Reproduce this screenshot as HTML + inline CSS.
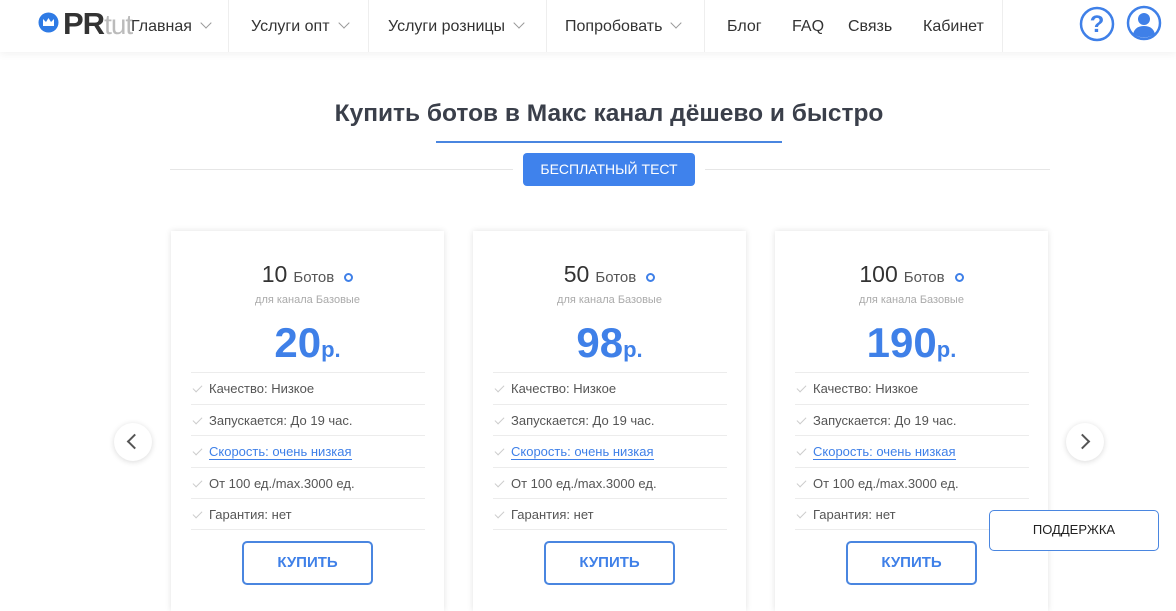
<!DOCTYPE html>
<html><head><meta charset="utf-8"><style>
*{margin:0;padding:0;box-sizing:border-box}
body{width:1176px;height:597px;overflow:hidden;background:#fff;font-family:"Liberation Sans",sans-serif;position:relative;color:#333}
.hdr{position:absolute;left:0;top:0;width:1176px;height:52px;background:#fff;box-shadow:0 2px 8px rgba(0,0,0,.06)}
.a{position:absolute;top:18px;font-size:16px;color:#333;white-space:nowrap}
.ch{display:inline-block;width:8px;height:8px;border-right:1.3px solid #999;border-bottom:1.3px solid #999;transform:rotate(45deg);margin-left:10px;position:relative;top:-4px}
.sep{position:absolute;top:0;width:1px;height:52px;background:#eee}
.card{position:absolute;top:231px;width:273px;height:380px;background:#fff;box-shadow:0 0 6px rgba(0,0,0,.12)}
.t{position:absolute;top:30px;left:0;width:100%;text-align:center;font-size:23px;color:#333}
.t span{font-size:15px;color:#555;margin-left:6px}
.t i{display:inline-block;width:9px;height:9px;border:2.5px solid #3f80e8;border-radius:50%;margin-left:10px}
.s{position:absolute;top:63px;width:100%;text-align:center;font-size:11px;color:#aaa}
.p{position:absolute;top:88px;width:100%;text-align:center;font-size:42px;font-weight:bold;color:#3f80e8}
.p span{font-size:22px}
.ul{position:absolute;top:141px;left:20px;width:234px}
.li{height:31.5px;border-top:1px solid #ececec;font-size:13px;color:#555;padding:8px 0 0 18px;position:relative}
.li:last-child{border-bottom:1px solid #ececec}
.li:before{content:"";position:absolute;left:4px;top:10px;width:4px;height:8px;border-right:1px solid #ccc;border-bottom:1px solid #ccc;transform:rotate(45deg)}
.li a{color:#3f80e8;text-decoration:none;border-bottom:1px solid #3f80e8}
.btn{position:absolute;left:71px;top:310px;width:131px;height:44px;border:2px solid #4a86e0;border-radius:5px;text-align:center;line-height:40px;font-weight:bold;font-size:15px;color:#3f80e8}
.arr{position:absolute;top:423px;width:38px;height:38px;border-radius:50%;background:#fff;box-shadow:0 1px 6px rgba(0,0,0,.15)}
.arr i{position:absolute;top:13px;width:11px;height:11px;border-left:2px solid #555;border-bottom:2px solid #555}
</style></head><body>
<div class="hdr">
<svg style="position:absolute;left:38px;top:12px" width="21" height="21"><circle cx="10.5" cy="10.5" r="10" fill="#2f7be5"/><path d="M5 14 L5 7 L8 10 L10.5 6 L13 10 L16 7 L16 14 Z" fill="#fff"/></svg>
<div style="position:absolute;left:63px;top:6px;font-size:31px;font-weight:bold;color:#333;letter-spacing:-1px">PR<span style="font-weight:normal;color:#bbb;font-size:28px">tut</span></div>
<div class="a" style="left:131px">Главная<span class="ch"></span></div>
<div class="sep" style="left:228px"></div>
<div class="a" style="left:251px">Услуги опт<span class="ch"></span></div>
<div class="sep" style="left:368px"></div>
<div class="a" style="left:388px">Услуги розницы<span class="ch"></span></div>
<div class="sep" style="left:546px"></div>
<div class="a" style="left:565px">Попробовать<span class="ch"></span></div>
<div class="sep" style="left:704px"></div>
<div class="a" style="left:727px">Блог</div>
<div class="a" style="left:792px">FAQ</div>
<div class="a" style="left:848px">Связь</div>
<div class="a" style="left:923px">Кабинет</div>
<div class="sep" style="left:1002px"></div>
<svg style="position:absolute;left:1079px;top:6px" width="36" height="36"><circle cx="18" cy="18" r="16" fill="none" stroke="#3f80e8" stroke-width="2.5"/><text x="18" y="26" text-anchor="middle" font-size="24" font-weight="bold" fill="#3f80e8" font-family="Liberation Sans">?</text></svg>
<svg style="position:absolute;left:1126px;top:5px" width="36" height="36"><circle cx="18" cy="18" r="16" fill="none" stroke="#3f80e8" stroke-width="2.5"/><circle cx="18" cy="14" r="6" fill="#3f80e8"/><path d="M7 29 Q9 21 18 21 Q27 21 29 29 Q18 36 7 29Z" fill="#3f80e8"/></svg>
</div>
<div style="position:absolute;top:100px;left:333px;width:552px;text-align:center;font-size:24.5px;font-weight:bold;color:#3a3f4a;white-space:nowrap">Купить ботов в Макс канал дёшево и быстро</div>
<div style="position:absolute;left:436px;top:141px;width:346px;height:2px;background:#4a86e0"></div>
<div style="position:absolute;left:170px;top:169px;width:343px;height:1px;background:#e6e6e6"></div>
<div style="position:absolute;left:705px;top:169px;width:345px;height:1px;background:#e6e6e6"></div>
<div style="position:absolute;left:523px;top:153px;width:172px;height:33px;background:#3f82ec;border-radius:4px;color:#fff;font-size:14px;text-align:center;line-height:33px">БЕСПЛАТНЫЙ ТЕСТ</div>

<div class="card" style="left:171px"><div class="t">10<span>Ботов</span><i></i></div><div class="s">для канала Базовые</div><div class="p">20<span>р.</span></div>
<div class="ul"><div class="li">Качество: Низкое</div><div class="li">Запускается: До 19 час.</div><div class="li"><a>Скорость: очень низкая</a></div><div class="li">От 100 ед./max.3000 ед.</div><div class="li">Гарантия: нет</div></div><div class="btn">КУПИТЬ</div></div>
<div class="card" style="left:473px"><div class="t">50<span>Ботов</span><i></i></div><div class="s">для канала Базовые</div><div class="p">98<span>р.</span></div>
<div class="ul"><div class="li">Качество: Низкое</div><div class="li">Запускается: До 19 час.</div><div class="li"><a>Скорость: очень низкая</a></div><div class="li">От 100 ед./max.3000 ед.</div><div class="li">Гарантия: нет</div></div><div class="btn">КУПИТЬ</div></div>
<div class="card" style="left:775px"><div class="t">100<span>Ботов</span><i></i></div><div class="s">для канала Базовые</div><div class="p">190<span>р.</span></div>
<div class="ul"><div class="li">Качество: Низкое</div><div class="li">Запускается: До 19 час.</div><div class="li"><a>Скорость: очень низкая</a></div><div class="li">От 100 ед./max.3000 ед.</div><div class="li">Гарантия: нет</div></div><div class="btn">КУПИТЬ</div></div>

<div class="arr" style="left:114px"><i style="left:15px;transform:rotate(45deg)"></i></div>
<div class="arr" style="left:1066px"><i style="left:11px;transform:rotate(-135deg)"></i></div>
<div style="position:absolute;left:989px;top:510px;width:170px;height:41px;border:1.5px solid #4a86e0;border-radius:5px;background:#fff;font-size:13px;text-align:center;line-height:38px;color:#222">ПОДДЕРЖКА</div>
</body></html>
